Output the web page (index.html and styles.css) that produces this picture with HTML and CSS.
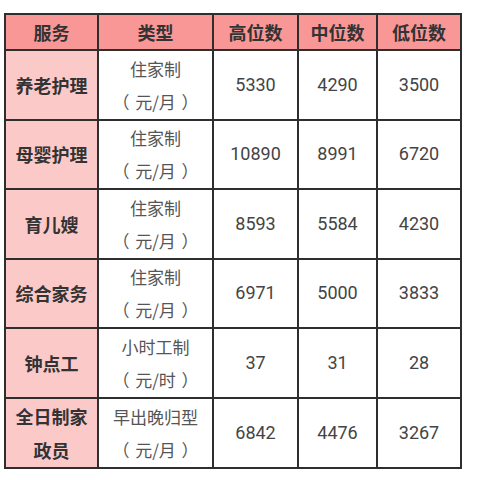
FILE: index.html
```html
<!DOCTYPE html>
<html lang="zh">
<head>
<meta charset="utf-8">
<link rel="stylesheet" href="styles.css">
</head>
<body>
<table class="wage">
  <colgroup>
    <col class="c1"><col class="c2"><col class="c3"><col class="c4"><col class="c5">
  </colgroup>
  <thead>
    <tr class="head">
      <th>服务</th><th>类型</th><th>高位数</th><th>中位数</th><th>低位数</th>
    </tr>
  </thead>
  <tbody>
    <tr>
      <td class="svc">养老护理</td>
      <td class="type">住家制<br>（&#8196;元/月&#8196;）</td>
      <td class="num">5330</td><td class="num">4290</td><td class="num">3500</td>
    </tr>
    <tr>
      <td class="svc">母婴护理</td>
      <td class="type">住家制<br>（&#8196;元/月&#8196;）</td>
      <td class="num">10890</td><td class="num">8991</td><td class="num">6720</td>
    </tr>
    <tr>
      <td class="svc">育儿嫂</td>
      <td class="type">住家制<br>（&#8196;元/月&#8196;）</td>
      <td class="num">8593</td><td class="num">5584</td><td class="num">4230</td>
    </tr>
    <tr>
      <td class="svc">综合家务</td>
      <td class="type">住家制<br>（&#8196;元/月&#8196;）</td>
      <td class="num">6971</td><td class="num">5000</td><td class="num">3833</td>
    </tr>
    <tr>
      <td class="svc">钟点工</td>
      <td class="type">小时工制<br>（&#8196;元/时&#8196;）</td>
      <td class="num">37</td><td class="num">31</td><td class="num">28</td>
    </tr>
    <tr>
      <td class="svc">全日制家<br>政员</td>
      <td class="type">早出晚归型<br>（&#8196;元/月&#8196;）</td>
      <td class="num">6842</td><td class="num">4476</td><td class="num">3267</td>
    </tr>
  </tbody>
</table>
</body>
</html>
```
FILE: styles.css
```css
html, body {
  background: #ffffff;
}
body {
  margin: 13px 0 0 4px;
  font-family: Roboto, "Noto Sans CJK SC", sans-serif;
}
.wage {
  border-collapse: collapse;
  width: 456px;
  table-layout: fixed;
}
.c1 { width: 93px; }
.c2 { width: 115px; }
.c3 { width: 85px; }
.c4 { width: 79px; }
.c5 { width: 84px; }
.wage th,
.wage td {
  border: 2px solid #2e2e2e;
  text-align: center;
  vertical-align: middle;
  padding: 0;
}
.head {
  height: 36px;
}
.head th {
  background: #f99797;
  color: #333333;
  font-size: 18px;
  font-weight: bold;
  font-family: "Noto Sans CJK SC", sans-serif;
  line-height: 24px;
}
tbody tr {
  height: 69.5px;
}
.svc {
  background: #fcc9c9;
  color: #333333;
  font-family: "Noto Sans CJK SC", sans-serif;
  font-weight: bold;
  font-size: 18px;
  line-height: 34px;
}
.type {
  color: #555555;
  font-family: "Noto Sans CJK SC", sans-serif;
  font-size: 17px;
  line-height: 33px;
}
.num {
  color: #444444;
  font-size: 18px;
  line-height: 24px;
  font-family: Roboto, sans-serif;
}
```
